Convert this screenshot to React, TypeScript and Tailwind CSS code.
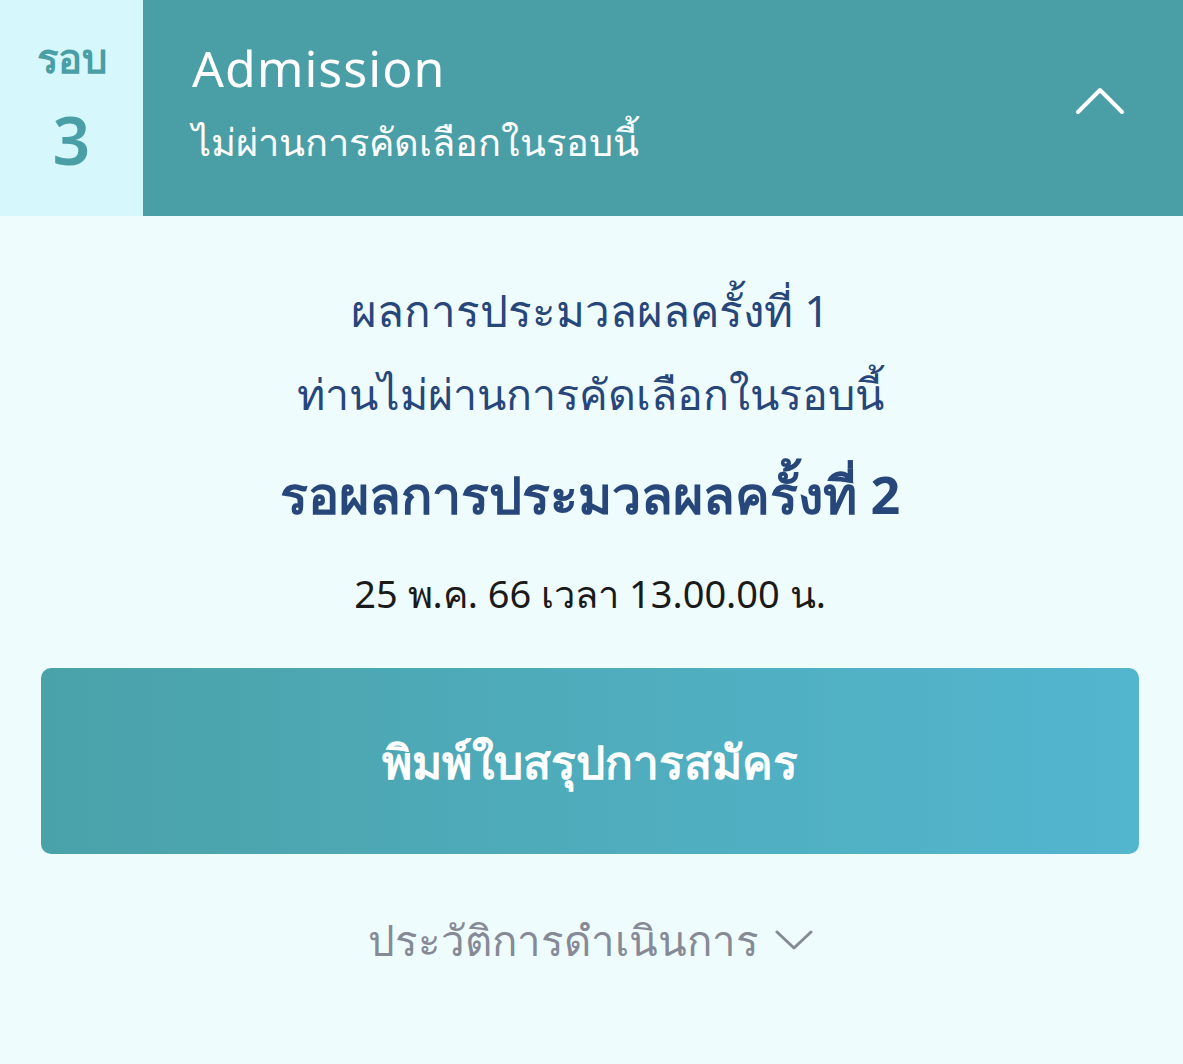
import React from 'react';

const ChevronUp = () => (
  <svg width="50" height="28" viewBox="0 0 50 28" fill="none">
    <path d="M3 25 L25 3 L47 25" stroke="white" strokeWidth="4" strokeLinecap="round" strokeLinejoin="round" />
  </svg>
);

const ChevronDown = () => (
  <svg width="38" height="22" viewBox="0 0 38 22" fill="none">
    <path d="M2 3 L19 19 L36 3" stroke="#858a96" strokeWidth="3" strokeLinecap="round" strokeLinejoin="round" />
  </svg>
);

const App = () => {
  return (
    <div
      className="min-h-[1064px] w-full bg-[#effcfd]"
      style={{ fontFamily: '"Noto Sans", "DejaVu Sans", sans-serif' }}
    >
      {/* Header */}
      <div className="flex h-[216px]">
        <div className="flex w-[143px] flex-col items-center justify-center bg-[#d6f8fc] pb-[2px] text-[#4a9ea6]">
          <span className="text-[40px] font-bold leading-[56px]">รอบ</span>
          <span className="mt-[8px] text-[66px] font-semibold leading-[90px]">3</span>
        </div>
        <div className="flex flex-1 items-center justify-between bg-[#4a9ea6] pl-[49px] pr-[58px]">
          <div className="flex flex-col pb-[10px] text-white">
            <span className="text-[50px] leading-[76px] tracking-[1px]">Admission</span>
            <span className="text-[38px] leading-[70px]">ไม่ผ่านการคัดเลือกในรอบนี้</span>
          </div>
          <div className="mb-[14px]">
            <ChevronUp />
          </div>
        </div>
      </div>

      {/* Body */}
      <div className="flex flex-col items-center pl-[41px] pr-[44px] pt-[52px]">
        <p className="text-[44px] leading-[84px] text-[#27477a]">ผลการประมวลผลครั้งที่ 1</p>
        <p className="text-[43px] leading-[84px] text-[#27477a]">ท่านไม่ผ่านการคัดเลือกในรอบนี้</p>
        <p className="mt-[8px] text-[52px] font-bold leading-[100px] text-[#27477a]">รอผลการประมวลผลครั้งที่ 2</p>
        <p className="mt-[4px] text-[38px] leading-[90px] text-[#1a1a1a]">25 พ.ค. 66 เวลา 13.00.00 น.</p>

        <button className="mt-[30px] flex h-[186px] w-full items-center justify-center rounded-[10px] bg-gradient-to-r from-[#4aa2a9] to-[#53b6cf] text-[46px] font-bold text-white">
          พิมพ์ใบสรุปการสมัคร
        </button>

        <div className="mt-[54px] flex items-center gap-[16px] text-[42px] text-[#858a96]">
          <span>ประวัติการดำเนินการ</span>
          <ChevronDown />
        </div>
      </div>
    </div>
  );
};

export default App;
